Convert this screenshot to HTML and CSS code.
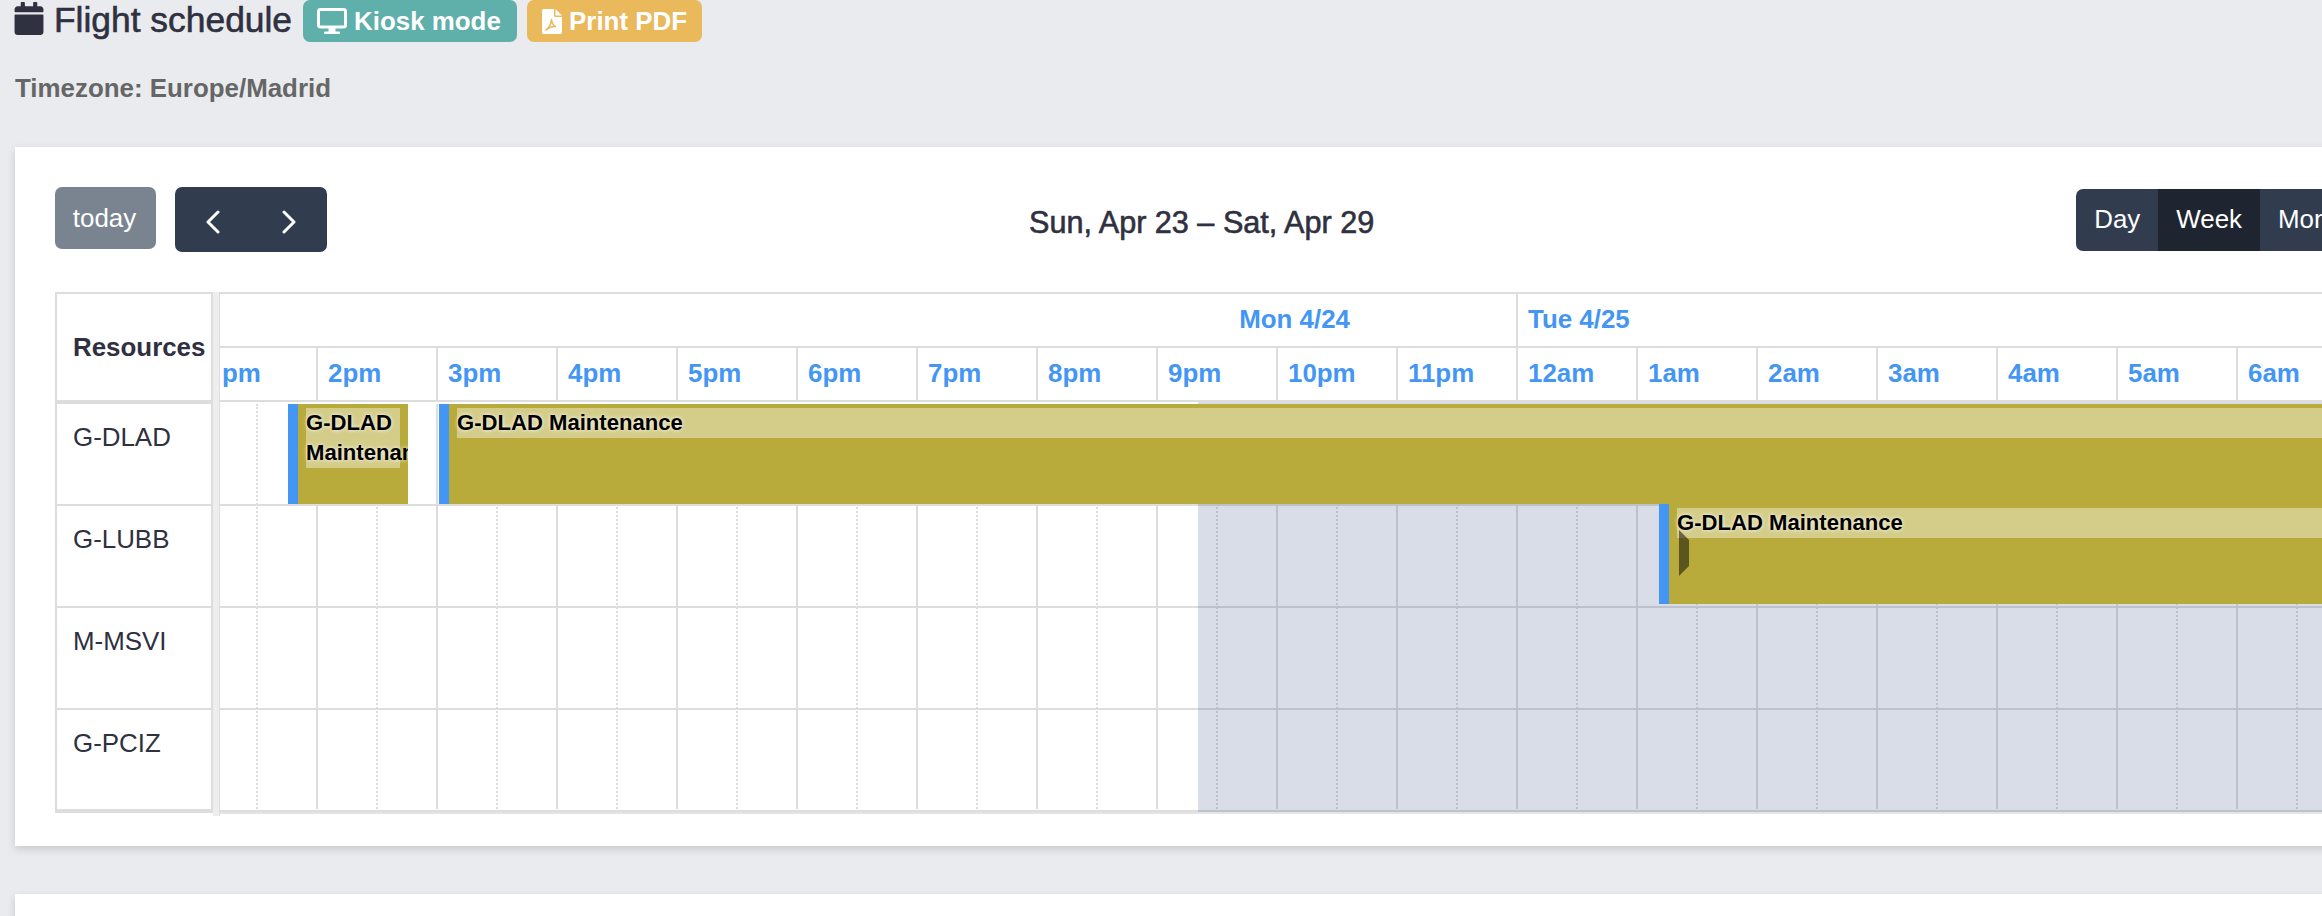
FILE: index.html
```html
<!DOCTYPE html>
<html lang="en">
  <head>
    <meta charset="UTF-8" />
    <title>Flight schedule</title>
    <link rel="stylesheet" href="styles.css">
  </head>
  <body>
    <div class="page-title">
      <svg class="icon-calendar" viewBox="0 0 448 512"><path d="M12 192h424c6.6 0 12 5.4 12 12v260c0 26.500-21.500 48-48 48H48c-26.500 0-48-21.500-48-48V204c0-6.600 5.400-12 12-12zm436-44v-36c0-26.500-21.500-48-48-48h-48V12c0-6.600-5.400-12-12-12h-40c-6.600 0-12 5.400-12 12v52H160V12c0-6.600-5.400-12-12-12h-40c-6.600 0-12 5.400-12 12v52H48C21.500 64 0 85.500 0 112v36c0 6.600 5.400 12 12 12h424c6.600 0 12-5.400 12-12z"/></svg>
      <h1>Flight schedule</h1>
      <a class="btn-top btn-kiosk">
        <svg class="icon-desktop" viewBox="0 0 30 26"><rect x="1.500" y="1.500" width="27" height="17.500" rx="2" fill="none" stroke="#fff" stroke-width="3"/><rect x="11.500" y="20" width="7" height="4" fill="#fff"/><rect x="7" y="23.500" width="16" height="2.500" rx="1" fill="#fff"/></svg>
        Kiosk mode
      </a>
      <a class="btn-top btn-pdf">
        <svg class="icon-pdf" viewBox="0 0 20 25"><path d="M0 1.500C0 .7.7 0 1.500 0H12v6.500c0 .8.700 1.500 1.500 1.500H20v15.500c0 .8-.7 1.500-1.500 1.500h-17C.7 25 0 24.300 0 23.500z" fill="#fff"/><path d="M13.500 0L20 6.500h-6.500z" fill="#fff"/><path d="M4 21c3-2 5-6 5.500-10.500.3 3 2 6 4 7-3-.4-6 .7-9.500 3.500z" fill="none" stroke="#e9b95c" stroke-width="1.600" stroke-linejoin="round"/></svg>
        Print PDF
      </a>
    </div>
    <p class="timezone">Timezone: Europe/Madrid</p>

    <div class="card">
      <div class="toolbar">
        <div class="toolbar-left">
          <button class="btn-today">today</button>
          <div class="nav-group">
            <button><svg viewBox="0 0 16 24"><path d="M13 2L3 12l10 10"/></svg></button>
            <button><svg viewBox="0 0 16 24"><path d="M3 2l10 10L3 22"/></svg></button>
          </div>
        </div>
        <h2>Sun, Apr 23 – Sat, Apr 29</h2>
        <div class="view-group">
          <button>Day</button>
          <button class="active">Week</button>
          <button>Month</button>
        </div>
      </div>

      <div class="scheduler">
        <div class="resources">
          <div class="res-head">Resources</div>
          <div class="res-row">G-DLAD</div>
          <div class="res-row">G-LUBB</div>
          <div class="res-row">M-MSVI</div>
          <div class="res-row res-last">G-PCIZ</div>
        </div>
        <div class="divider"></div>
        <div class="timeline">
          <div class="time-head">
            <div class="day-row">
              <div class="day-mon">Mon 4/24</div>
              <div class="day-tue">Tue 4/25</div>
            </div>
            <div class="slot-row">
              <div class="slot-label slot-cut">pm</div>
              <div class="slot-label">2pm</div>
              <div class="slot-label">3pm</div>
              <div class="slot-label">4pm</div>
              <div class="slot-label">5pm</div>
              <div class="slot-label">6pm</div>
              <div class="slot-label">7pm</div>
              <div class="slot-label">8pm</div>
              <div class="slot-label">9pm</div>
              <div class="slot-label">10pm</div>
              <div class="slot-label">11pm</div>
              <div class="slot-label">12am</div>
              <div class="slot-label">1am</div>
              <div class="slot-label">2am</div>
              <div class="slot-label">3am</div>
              <div class="slot-label">4am</div>
              <div class="slot-label">5am</div>
              <div class="slot-label">6am</div>
            </div>
          </div>
          <div class="time-body">
            <div class="slot-lines">
              <div></div><div></div><div></div><div></div><div></div><div></div>
              <div></div><div></div><div></div><div></div><div></div><div></div>
              <div></div><div></div><div></div><div></div><div></div><div></div>
            </div>
            <div class="row">
              <div class="event event-short"><div class="event-label">G-DLAD Maintenance</div></div>
              <div class="event event-long"><div class="event-label">G-DLAD Maintenance</div></div>
            </div>
            <div class="row"></div>
            <div class="row"></div>
            <div class="row"></div>
            <div class="off-hours"></div>
            <div class="event event-next">
              <div class="event-label">G-DLAD Maintenance</div>
              <div class="event-marker"></div>
            </div>
          </div>
        </div>
      </div>
    </div>

    <div class="card card-next"></div>
  </body>
</html>
```

FILE: styles.css
```css
html,
body {
  height: 916px;
  overflow: hidden;
}
body {
  margin: 0;
  padding-left: 15px;
  background-color: #e9ebef;
  color: #2f3040;
  font-family: "Liberation Sans", Arial, sans-serif;
  font-size: 25.9px;
}
button {
  font-family: inherit;
  font-size: inherit;
  color: #fff;
  border: none;
  padding: 0;
}

/* page title */
.page-title {
  display: flex;
  align-items: flex-start;
  height: 42px;
}
.icon-calendar {
  width: 30px;
  height: 33px;
  margin: 2px 10px 0 -1px;
  fill: #2f3040;
}
h1 {
  margin: 0 11px 0 0;
  font-size: 35.4px;
  font-weight: normal;
  line-height: 40px;
  -webkit-text-stroke: 0.6px #2f3040;
}
.btn-top {
  display: flex;
  align-items: center;
  height: 42px;
  box-sizing: border-box;
  margin-right: 10px;
  border-radius: 7px;
  color: #fff;
  font-weight: bold;
}
.btn-kiosk {
  width: 214px;
  padding-left: 14px;
  background-color: #5fafab;
}
.btn-pdf {
  width: 175px;
  padding-left: 15px;
  background-color: #e9b95c;
}
.icon-desktop {
  width: 30px;
  height: 26px;
  margin: 0 7px 0 0;
}
.icon-pdf {
  width: 20px;
  height: 25px;
  margin: 0 7px 0 0;
}
.timezone {
  margin: 30px 0 0;
  line-height: 32px;
  font-weight: bold;
  color: #666;
}

/* card */
.card {
  width: 2500px;
  box-sizing: border-box;
  margin-top: 43px;
  padding: 40px 40px 33px;
  background: #fff;
  box-shadow: 0 3px 8px rgba(0, 0, 0, 0.15);
}
.card-next {
  height: 200px;
  margin-top: 48px;
}

/* toolbar */
.toolbar {
  display: flex;
  justify-content: space-between;
  align-items: center;
  width: 2313px;
  height: 65px;
  margin-bottom: 40px;
}
.toolbar-left {
  display: flex;
  align-items: flex-start;
  height: 65px;
}
.btn-today {
  width: 101px;
  height: 62px;
  margin-right: 19px;
  padding-right: 2px;
  border-radius: 7px;
  background-color: #7a8490;
}
.nav-group {
  display: flex;
  width: 152px;
  height: 65px;
  border-radius: 7px;
  overflow: hidden;
  background-color: #313d4f;
}
.nav-group button {
  display: flex;
  flex: 1;
  align-items: center;
  justify-content: center;
  padding-top: 5px;
  background: none;
}
.nav-group svg {
  width: 16px;
  height: 24px;
  fill: none;
  stroke: #fff;
  stroke-width: 3;
  stroke-linecap: round;
  stroke-linejoin: round;
}
h2 {
  margin: 5px 0 0;
  font-size: 30.6px;
  font-weight: normal;
  -webkit-text-stroke: 0.6px #2f3040;
}
.view-group {
  display: flex;
  height: 62px;
  border-radius: 7px;
  overflow: hidden;
  background-color: #313d4f;
}
.view-group button {
  padding: 0 18px;
  background: none;
}
.view-group .active {
  background-color: #1e2530;
}

/* scheduler */
.scheduler {
  display: flex;
  align-items: flex-start;
  height: 521px;
}
.resources {
  width: 158px;
  box-sizing: border-box;
  border-left: 2px solid #ddd;
  border-right: 2px solid #ddd;
  border-top: 2px solid #ddd;
}
.res-head {
  height: 110px;
  box-sizing: border-box;
  padding: 39px 0 0 16px;
  border-bottom: 4px solid #ddd;
  font-weight: bold;
}
.res-row {
  height: 102px;
  box-sizing: border-box;
  padding: 19px 0 0 16px;
  border-bottom: 2px solid #ddd;
}
.res-last {
  height: 103px;
  border-bottom-width: 4px;
}
.divider {
  width: 7px;
  height: 524px;
  box-sizing: border-box;
  background-color: #eee;
  border-right: 1px solid #ddd;
}
.timeline {
  flex: 1;
  min-width: 0;
  overflow: hidden;
}
.time-head {
  width: 2160px;
  margin-left: -24px;
}
.day-row {
  display: flex;
  height: 56px;
  box-sizing: border-box;
  border-top: 2px solid #ddd;
  border-bottom: 2px solid #ddd;
  color: #4496f5;
  font-weight: bold;
  line-height: 50px;
}
.day-mon {
  width: 1320px;
  box-sizing: border-box;
  padding-right: 166px;
  text-align: right;
}
.day-tue {
  padding-left: 10px;
  border-left: 2px solid #ddd;
}
.slot-row {
  display: flex;
  height: 54px;
  box-sizing: border-box;
  border-bottom: 2px solid #ddd;
  color: #4496f5;
  font-weight: bold;
  line-height: 50px;
}
.slot-label {
  width: 120px;
  box-sizing: border-box;
  padding-left: 10px;
  border-left: 2px solid #ddd;
}
.slot-cut {
  padding-left: 24px;
  border-left-color: transparent;
}

/* time grid */
.time-body {
  position: relative;
  width: 2160px;
  margin-left: -24px;
  padding-top: 2px;
  border-bottom: 2px solid #e4e4e4;
}
.slot-lines {
  position: absolute;
  top: 2px;
  bottom: 3px;
  left: 0;
  display: flex;
}
.slot-lines div {
  position: relative;
  width: 120px;
  box-sizing: border-box;
  border-left: 2px solid #ddd;
}
.slot-lines div::after {
  content: "";
  position: absolute;
  top: 0;
  bottom: 0;
  left: 58px;
  border-left: 2px dotted #ddd;
}
.row {
  position: relative;
  height: 102px;
  box-sizing: border-box;
  border-bottom: 2px solid #ddd;
}
.off-hours {
  position: absolute;
  top: 0;
  bottom: 0;
  left: 1002px;
  right: 0;
  background-color: rgba(65, 85, 140, 0.2);
}
.event {
  position: absolute;
  z-index: 1;
  box-sizing: border-box;
  height: 100px;
  padding: 4px 0 0 8px;
  border-left: 10px solid #4496f5;
  background-color: #b8ab3b;
  color: #000;
  font-size: 22.1px;
  font-weight: bold;
  line-height: 30px;
  overflow: hidden;
}
.event-short {
  top: 0;
  left: 92px;
  width: 120px;
}
.event-short .event-label {
  width: 94px;
}
.event-long {
  top: 0;
  left: 243px;
  right: 0;
}
.event-next {
  top: 102px;
  left: 1463px;
  right: 0;
}
.event-label {
  background-color: rgba(255, 255, 255, 0.4);
  text-shadow: 0 0 4px #fff;
}
.event-marker {
  position: absolute;
  top: 26px;
  left: 10px;
  width: 10px;
  height: 46px;
  background-color: rgba(0, 0, 0, 0.5);
  clip-path: polygon(0 0, 100% 10px, 100% 36px, 0 100%);
}
```
